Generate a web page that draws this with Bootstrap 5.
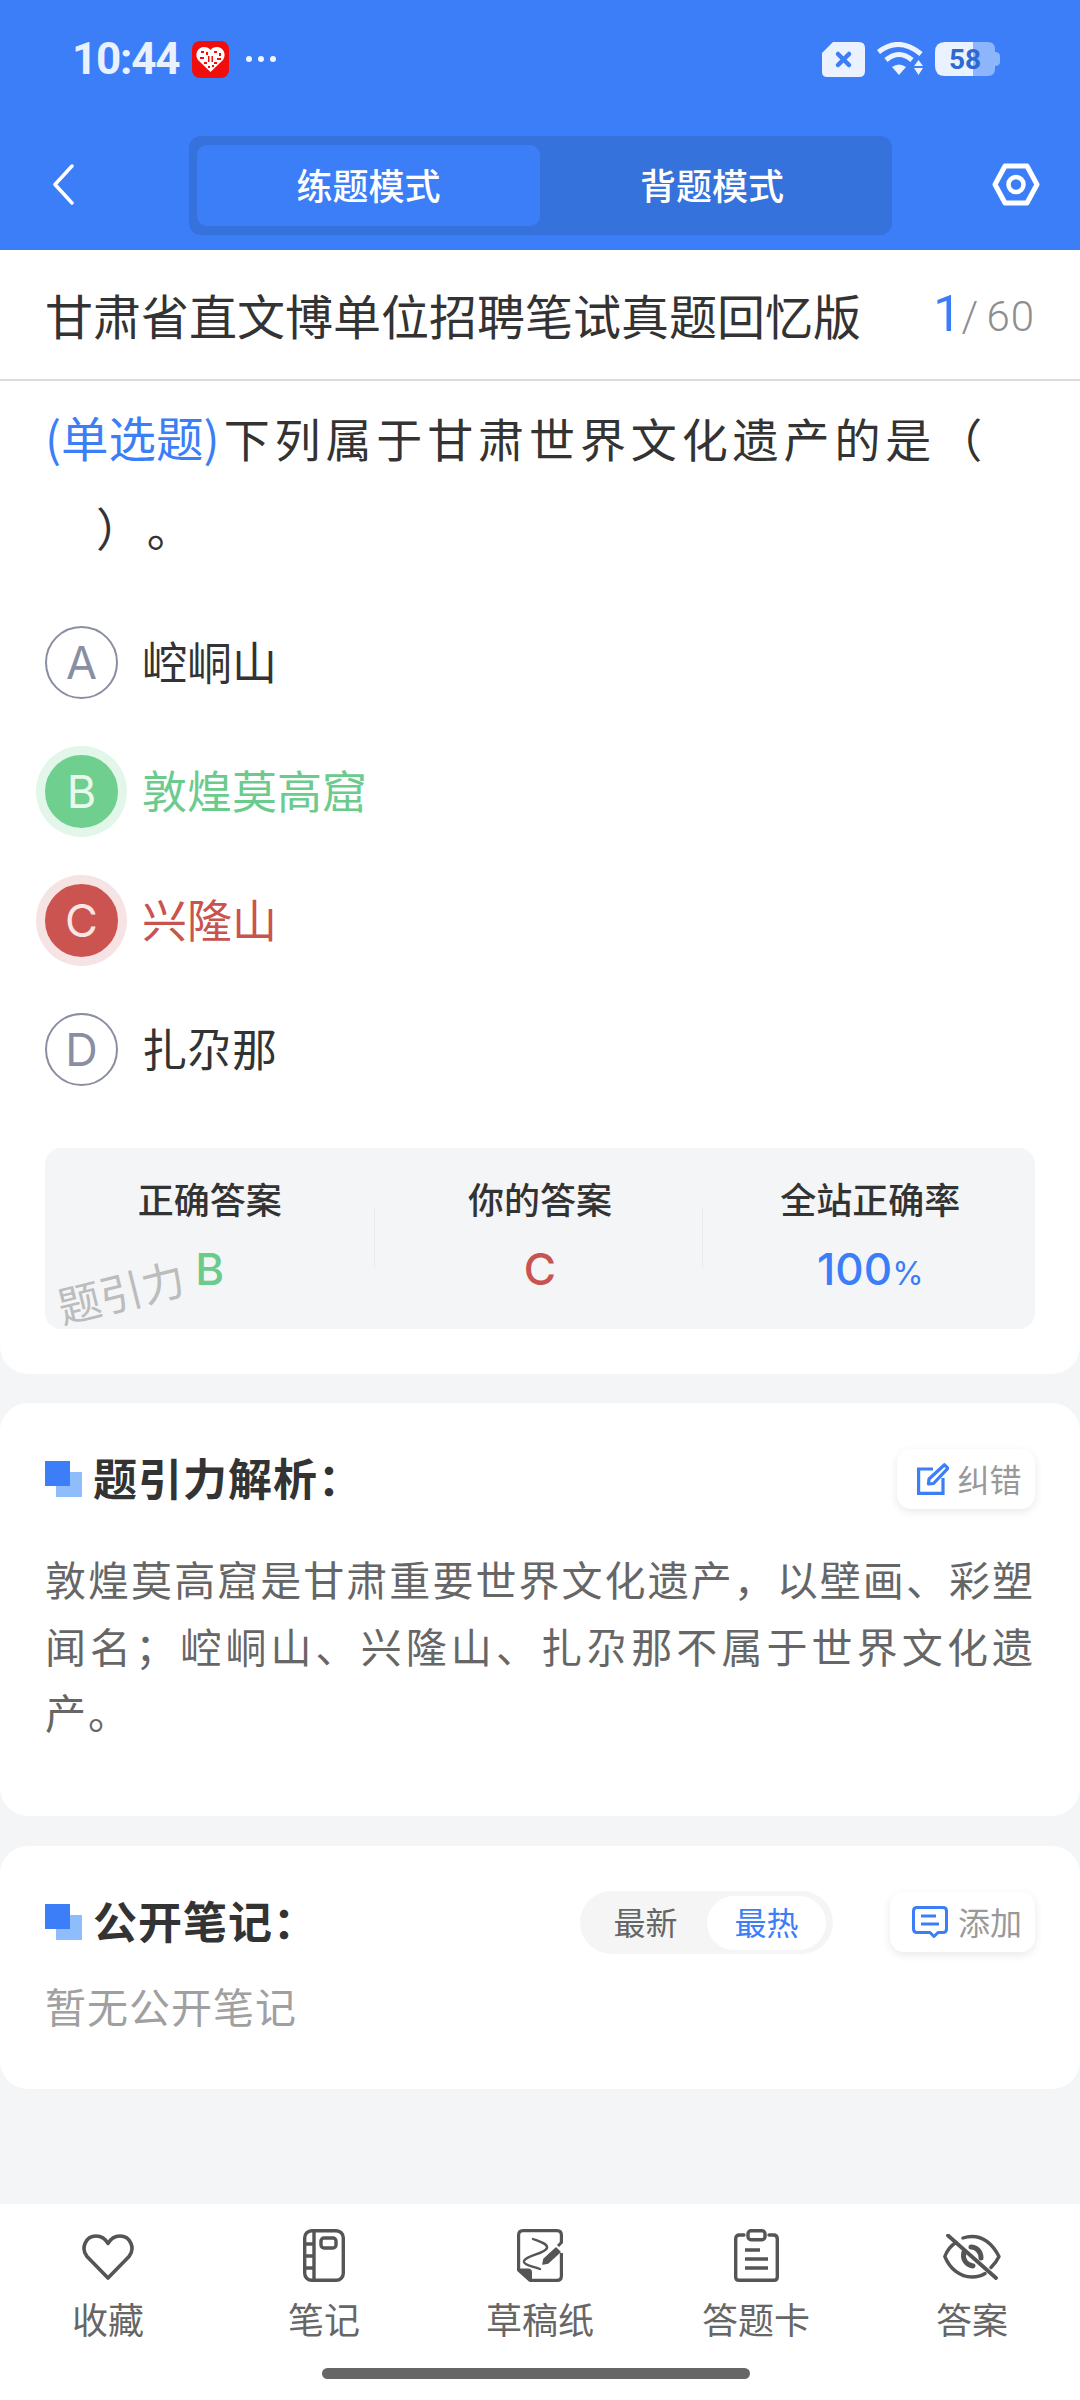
<!DOCTYPE html>
<html lang="zh-CN">
<head>
<meta charset="utf-8">
<title>练题模式</title>
<link href="https://cdn.jsdelivr.net/npm/bootstrap@5.3.0/dist/css/bootstrap.min.css" rel="stylesheet">
<style>
html,body{margin:0;padding:0}
body{width:1080px;height:2400px;overflow:hidden;background:#f4f5f7;color:#333;font-family:"Roboto","Noto Sans CJK SC",sans-serif;display:flex;flex-direction:column;text-spacing-trim:space-all}
.top-blue{background:#3b7ef8;height:250px;flex:none}
.status-row{height:118px;padding:0 80px 0 72px;color:#e9f1ff}
.clock{font-family:"Roboto",sans-serif;font-weight:700;font-size:44px;line-height:1;letter-spacing:-1.2px;margin-right:13px}
.app-badge{width:37px;height:37px;margin-right:17px;display:block}
.more-dots{width:30px;height:6px;display:block}
.nav-row{height:132px;padding:18px 40px 15px 52px;align-items:flex-start}
.back-ico{width:22px;height:41px;margin-top:28px;display:block}
.gear-ico{width:48px;height:43px;margin-top:27px;display:block}
.tab-shell{width:703px;height:99px;background:#3572dc;border-radius:12px;padding:9px 8px;margin-left:115px;margin-right:100px}
.tab-pill{flex:1;border-radius:10px;color:#fff;font:500 36px/78px "Noto Sans CJK SC",sans-serif;text-align:center}
.tab-pill.on{flex:none;width:343px;background:#3b7ef8}
.sheet-one{background:#fff;border-radius:0 0 28px 28px;flex:none}
.title-row{height:131px;border-bottom:2px solid #dcdcdc;padding:0 45px 2px}
.paper-name{font:400 48px/1 "Noto Sans CJK SC",sans-serif;color:#333}
.count-now{font-size:50px;font-weight:400;color:#3b7ef8;line-height:1}
.count-all{font-size:42px;font-weight:300;color:#8e8e8e;line-height:1;margin-left:0;letter-spacing:1px;word-spacing:-4px}
.q-text{padding:11px 45px 0;font:400 46px/89px "Noto Sans CJK SC",sans-serif;letter-spacing:4.900px;color:#333}
.q-tag{color:#3b7ef8;letter-spacing:0;font-size:47.500px;margin-right:4px}
.opt-list{padding:27px 45px 0}
.opt-row{height:129px;gap:24px}
.opt-mark{width:73px;height:73px;flex:none;font:400 45px/1 "Inter",sans-serif;border:2px solid #8a8ea3;color:#8a8ea3}
.opt-name{font:400 45px/1 "Noto Sans CJK SC",sans-serif;color:#333;padding-bottom:4px}
.is-right .opt-mark{background:#6ecf8e;border-color:#6ecf8e;color:#e9f9ee;box-shadow:0 0 0 9px #e3f6ea}
.is-right .opt-name{color:#6bcb8c}
.is-wrong .opt-mark{background:#cb5450;border-color:#cb5450;color:#f8e6e5;box-shadow:0 0 0 9px #f6e3e3}
.is-wrong .opt-name{color:#c9534f}
.stat-panel{position:relative;margin:34px 45px 45px;height:181px;background:#f4f5f7;border-radius:16px;padding-top:27px}
.stat-col{flex:1}
.stat-sep{width:1px;height:60px;margin-top:33px;background:#e9eaed;flex:none}
.stat-sep.sep-b{margin-left:-3px;margin-right:3px}
.stat-label{font:500 36px/46px "Noto Sans CJK SC",sans-serif;color:#333}
.stat-val{font:500 44px/56px "Inter",sans-serif;margin-top:20px}
.stat-val small{font-size:32px;font-weight:400}
.c-green{color:#6bcb8c}.c-red{color:#c9534f}.c-blue{color:#3b7ef8}
.stamp{position:absolute;left:11px;top:121px;font:400 43px/1 "Noto Sans CJK SC",sans-serif;color:#bcbcbc;transform:rotate(-14deg);white-space:nowrap}
.sheet{background:#fff;border-radius:28px;flex:none}
.sheet-two{margin-top:29px;padding:46px 45px 71px}
.sheet-three{margin-top:30px;padding:45px 45px 51px}
.head-mark{width:37px;height:36px;flex:none;display:block}
.head-text{font:600 44px/1 "Noto Sans CJK SC",sans-serif;color:#333;margin-left:11px;letter-spacing:1px;padding-bottom:4px}
.tool-btn{height:60px;width:138px;background:#fff;border-radius:14px;box-shadow:0 3px 10px rgba(0,0,0,.09);font:400 32px/1 "Noto Sans CJK SC",sans-serif;color:#999;gap:8px;padding-left:7px}
.tool-btn span{padding-bottom:3px}
.tool-btn svg{display:block;flex:none}
.tool-wide{width:145px;padding-left:9px;gap:10px}
.expl{margin:36px 0 0;font:400 41px/66.500px "Noto Sans CJK SC",sans-serif;letter-spacing:2px;color:#666;text-align:justify}
.sort-pill{width:253px;height:63px;background:#f5f5f5;border-radius:32px;padding:5px 7px 4px 0;font:400 32px/1 "Noto Sans CJK SC",sans-serif;color:#666;margin-right:57px}
.sort-a{width:127px;text-align:center;padding-left:4px;padding-bottom:3px}
.sort-b{width:119px;height:54px;background:#fff;border-radius:27px;color:#3b7ef8;padding-bottom:3px}
.none-note{margin:21px 0 0;font:400 41px/60px "Noto Sans CJK SC",sans-serif;color:#a0a0a0;letter-spacing:1px;padding-bottom:3px}
.bottom-bar{margin-top:auto;height:196px;background:#fff;flex:none;padding-top:23px}
.bar-item{width:216px;text-align:center}
.bar-ico{height:60px;display:flex;align-items:center;justify-content:center}
.lift{margin-bottom:4px}
.bar-text{font:400 36px/44px "Noto Sans CJK SC",sans-serif;color:#666;margin-top:9px}
.home-line{width:428px;height:11px;background:#666;border-radius:6px;margin:28px 0 0 322px}
</style>
</head>
<body>
<header class="top-blue">
  <div class="status-row d-flex align-items-center">
    <span class="clock">10:44</span>
    <svg class="app-badge" viewBox="0 0 37 37"><rect width="37" height="37" rx="8" fill="#f20d0d"/><path d="M18.500 31 L6 19 C2 13 6 6 12 6 C15 6 17 7 18.500 9 C20 7 22 6 25 6 C31 6 35 13 31 19 Z" fill="#fff"/><g fill="#f20d0d"><rect x="9" y="10" width="3" height="2"/><rect x="14" y="11" width="2" height="3"/><rect x="22" y="10" width="3" height="2"/><rect x="27" y="12" width="2" height="3"/><rect x="8" y="16" width="4" height="2"/><rect x="16" y="15" width="1.500" height="6"/><rect x="19.500" y="15" width="1.500" height="6"/><rect x="25" y="17" width="4" height="2"/><rect x="12" y="21" width="3" height="2"/><rect x="22" y="21" width="3" height="2"/><rect x="16" y="25" width="2" height="2"/><rect x="20" y="24" width="2" height="2"/></g></svg>
    <svg class="more-dots" viewBox="0 0 30 6" fill="#f0f5ff"><circle cx="3" cy="3" r="3"/><circle cx="15" cy="3" r="3"/><circle cx="27" cy="3" r="3"/></svg>
    <span class="ms-auto d-flex align-items-center" style="gap:12px">
      <svg width="43" height="35" viewBox="0 0 43 35" style="display:block"><path d="M11 0 H37 Q43 0 43 6 V29 Q43 35 37 35 H5 Q0 35 0 30 V11 Z" fill="#eaf1ff"/><path d="M16 12 L27 23 M27 12 L16 23" stroke="#3b7ef8" stroke-width="4.500" stroke-linecap="round"/></svg>
      <svg width="46" height="34" viewBox="0 0 46 34" style="display:block"><g fill="none" stroke="#eef4ff" stroke-width="5"><path d="M1.500 10 Q22 -6 44 12"/><path d="M9 18 Q22 7 35 18"/></g><path d="M15 25 Q22 20 29 25 L22 33 Z" fill="#eef4ff"/><path d="M37 24 L41.500 18 L46 24 Z M37 26 H46 L41.500 33 Z" fill="#eef4ff"/></svg>
      <svg width="65" height="34" viewBox="0 0 65 34" style="display:block"><path d="M30 0 H53 Q60 0 60 7 V10 Q65 10 65 14 V20 Q65 24 60 24 V27 Q60 34 53 34 H30 Z" fill="#8db5fb"/><path d="M10 0 H38 V34 H10 Q0 34 0 24 V10 Q0 0 10 0 Z" fill="#eaf1ff"/><text x="30" y="27" text-anchor="middle" font-family="Roboto,sans-serif" font-weight="700" font-size="28" fill="#2e68d0">58</text></svg>
    </span>
  </div>
  <div class="nav-row d-flex">
    <svg class="back-ico" viewBox="0 0 22 41" fill="none" stroke="#fff" stroke-width="3.500" stroke-linecap="round" stroke-linejoin="round"><path d="M20 2 L3 20.500 L20 39"/></svg>
    <div class="tab-shell d-flex">
      <div class="tab-pill on">练题模式</div>
      <div class="tab-pill">背题模式</div>
    </div>
    <svg class="gear-ico" viewBox="0 0 48 43" fill="none" stroke="#fff" stroke-width="5" stroke-linejoin="round"><path d="M13 3 H35 L45 21.500 L35 40 H13 L3 21.500 Z"/><circle cx="24" cy="21.500" r="7.500" stroke-width="4.500"/></svg>
  </div>
</header>

<section class="sheet-one">
  <div class="title-row d-flex align-items-center justify-content-between">
    <div class="paper-name">甘肃省直文博单位招聘笔试真题回忆版</div>
    <div class="d-flex align-items-baseline"><span class="count-now">1</span><span class="count-all">/ 60</span></div>
  </div>
  <div class="q-text"><span class="q-tag">(单选题)</span>下列属于甘肃世界文化遗产的是（<br>　）。</div>
  <div class="opt-list">
    <div class="opt-row d-flex align-items-center"><span class="opt-mark rounded-circle d-flex align-items-center justify-content-center">A</span><span class="opt-name">崆峒山</span></div>
    <div class="opt-row is-right d-flex align-items-center"><span class="opt-mark rounded-circle d-flex align-items-center justify-content-center">B</span><span class="opt-name">敦煌莫高窟</span></div>
    <div class="opt-row is-wrong d-flex align-items-center"><span class="opt-mark rounded-circle d-flex align-items-center justify-content-center">C</span><span class="opt-name">兴隆山</span></div>
    <div class="opt-row d-flex align-items-center"><span class="opt-mark rounded-circle d-flex align-items-center justify-content-center">D</span><span class="opt-name">扎尕那</span></div>
  </div>
  <div class="stat-panel d-flex text-center">
    <div class="stat-col"><div class="stat-label">正确答案</div><div class="stat-val c-green">B</div></div>
    <div class="stat-sep"></div>
    <div class="stat-col"><div class="stat-label">你的答案</div><div class="stat-val c-red">C</div></div>
    <div class="stat-sep sep-b"></div>
    <div class="stat-col"><div class="stat-label">全站正确率</div><div class="stat-val c-blue">100<small>%</small></div></div>
    <div class="stamp">题引力</div>
  </div>
</section>

<section class="sheet sheet-two">
  <div class="d-flex align-items-center">
    <svg class="head-mark" viewBox="0 0 37 36"><rect x="11" y="11" width="26" height="25" fill="#8fbcfb"/><rect width="25" height="25" fill="#3b7ef8"/></svg>
    <span class="head-text">题引力解析：</span>
    <span class="tool-btn ms-auto d-flex align-items-center justify-content-center">
      <svg width="32" height="32" viewBox="0 0 32 32" fill="none" stroke="#3b7ef8" stroke-width="3.200"><path d="M16 6 H1.600 V30.400 H26 V15"/><path d="M27.500 1.800 L31 5.200 L16.500 20.500 L11.500 21 L12 16 Z" stroke-linejoin="round"/></svg>
      <span>纠错</span>
    </span>
  </div>
  <p class="expl">敦煌莫高窟是甘肃重要世界文化遗产，以壁画、彩塑闻名；崆峒山、兴隆山、扎尕那不属于世界文化遗产。</p>
</section>

<section class="sheet sheet-three">
  <div class="d-flex align-items-center">
    <svg class="head-mark" viewBox="0 0 37 36"><rect x="11" y="11" width="26" height="25" fill="#8fbcfb"/><rect width="25" height="25" fill="#3b7ef8"/></svg>
    <span class="head-text">公开笔记：</span>
    <span class="sort-pill ms-auto d-flex align-items-center">
      <span class="sort-a">最新</span>
      <span class="sort-b d-flex align-items-center justify-content-center">最热</span>
    </span>
    <span class="tool-btn tool-wide d-flex align-items-center justify-content-center">
      <svg width="36" height="32" viewBox="0 0 36 32" fill="none" stroke="#3b7ef8" stroke-width="3"><path d="M5 1.500 H31 Q34.500 1.500 34.500 5 V23 Q34.500 26.500 31 26.500 H26 L22 30.500 L18 26.500 H5 Q1.500 26.500 1.500 23 V5 Q1.500 1.500 5 1.500 Z" stroke-linejoin="round"/><path d="M9 10 H24 M9 18 H27" stroke-width="3.200"/></svg>
      <span>添加</span>
    </span>
  </div>
  <p class="none-note">暂无公开笔记</p>
</section>

<footer class="bottom-bar">
  <div class="d-flex">
    <div class="bar-item"><div class="bar-ico"><svg width="52" height="46" viewBox="0 0 52 46" fill="none" stroke="#555" stroke-width="3.600" stroke-linejoin="round"><path d="M26 44 L5 22.500 C-1.500 14.500 3.500 2 14 2 C19.500 2 23.500 5 26 9.500 C28.500 5 32.500 2 38 2 C48.500 2 53.500 14.500 47 22.500 Z"/></svg></div><div class="bar-text">收藏</div></div>
    <div class="bar-item"><div class="bar-ico"><svg class="lift" width="42" height="53" viewBox="0 0 42 53" fill="none" stroke="#555" stroke-width="3.400"><rect x="1.700" y="1.700" width="38.600" height="49.600" rx="7"/><path d="M11 2 V51 M2 15 H11 M2 27 H11 M2 39 H11"/><rect x="18" y="9" width="15" height="10" rx="3"/></svg></div><div class="bar-text">笔记</div></div>
    <div class="bar-item"><div class="bar-ico"><svg class="lift" width="46" height="53" viewBox="0 0 46 53" fill="none" stroke="#555" stroke-width="3.200" stroke-linejoin="round"><path d="M44.400 14 V6 Q44.400 1.600 40 1.600 H6 Q1.600 1.600 1.600 6 V41 L13 51.400 H40 Q44.400 51.400 44.400 47 V24"/><path d="M2 40.500 H11 Q14 40.500 14 43.500 V51 Z" fill="#555" stroke-width="2"/><path d="M16 10 C24 13 31 15 30 19 C28 25 6 27 7 33 C8 37 16 37 23 40" stroke-width="2.400" stroke-linecap="round"/><path d="M26 35 L27 30 L39 19 L43 23 L31 34 Z" fill="#555" stroke-width="1.500"/><path d="M41 17 L45 13" stroke-width="3"/></svg></div><div class="bar-text">草稿纸</div></div>
    <div class="bar-item"><div class="bar-ico"><svg class="lift" width="45" height="53" viewBox="0 0 45 53" fill="none" stroke="#555" stroke-width="3.400" stroke-linecap="round" stroke-linejoin="round"><path d="M10 6 H5.500 Q1.700 6 1.700 10 V48 Q1.700 51.300 5 51.300 H40 Q43.300 51.300 43.300 48 V10 Q43.300 6 39.500 6 H35"/><rect x="14" y="1.700" width="17" height="9" rx="3"/><path d="M11 21 H26 M11 30 H34 M11 39 H34" stroke-linecap="butt"/></svg></div><div class="bar-text">答题卡</div></div>
    <div class="bar-item"><div class="bar-ico"><svg width="58" height="46" viewBox="0 0 58 46" fill="none" stroke="#555" stroke-width="3.400" stroke-linecap="round" stroke-linejoin="round"><path d="M13 8.500 C8 11.500 4 16.500 1.800 22.500 C7 35 17 43 29 43 C34 43 38 42 42 39.500 M20 4 C23 3 26 2.500 29 2.500 C41 2.500 50 11 56 22.500 C54 27 51 30.500 48 33.500"/><path d="M5 1.500 L53 44" stroke-width="3.800"/><path d="M21 18 C19 25 23 31 30 32 M28 13 C33 13 38 17 38 24" stroke-width="5"/></svg></div><div class="bar-text">答案</div></div>
  </div>
  <div class="home-line"></div>
</footer>
</body>
</html>
